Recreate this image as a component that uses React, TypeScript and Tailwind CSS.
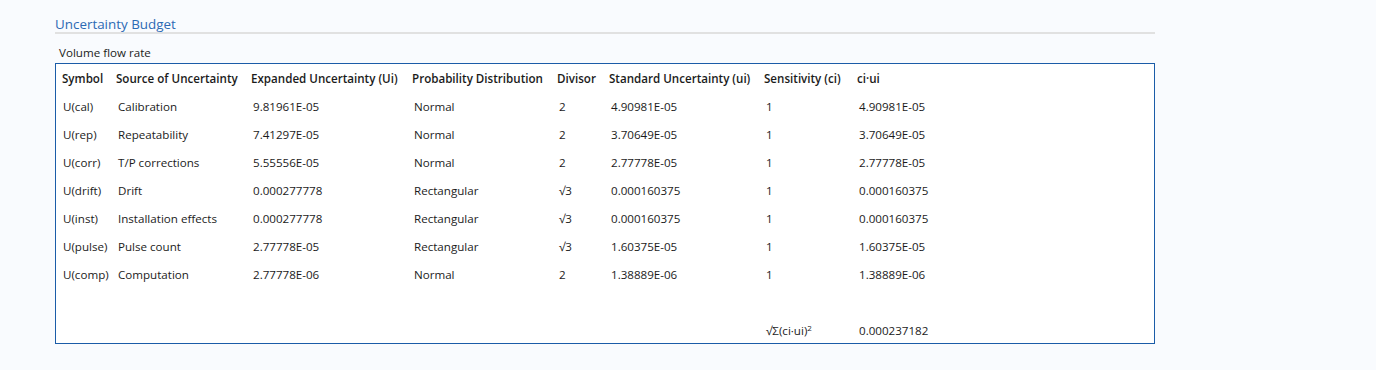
import React from 'react';

interface BudgetRow {
  symbol: string;
  source: string;
  expanded: string;
  distribution: string;
  divisor: string;
  standard: string;
  sensitivity: string;
  contribution: string;
}

const rows: BudgetRow[] = [
  { symbol: 'U(cal)', source: 'Calibration', expanded: '9.81961E-05', distribution: 'Normal', divisor: '2', standard: '4.90981E-05', sensitivity: '1', contribution: '4.90981E-05' },
  { symbol: 'U(rep)', source: 'Repeatability', expanded: '7.41297E-05', distribution: 'Normal', divisor: '2', standard: '3.70649E-05', sensitivity: '1', contribution: '3.70649E-05' },
  { symbol: 'U(corr)', source: 'T/P corrections', expanded: '5.55556E-05', distribution: 'Normal', divisor: '2', standard: '2.77778E-05', sensitivity: '1', contribution: '2.77778E-05' },
  { symbol: 'U(drift)', source: 'Drift', expanded: '0.000277778', distribution: 'Rectangular', divisor: '√3', standard: '0.000160375', sensitivity: '1', contribution: '0.000160375' },
  { symbol: 'U(inst)', source: 'Installation effects', expanded: '0.000277778', distribution: 'Rectangular', divisor: '√3', standard: '0.000160375', sensitivity: '1', contribution: '0.000160375' },
  { symbol: 'U(pulse)', source: 'Pulse count', expanded: '2.77778E-05', distribution: 'Rectangular', divisor: '√3', standard: '1.60375E-05', sensitivity: '1', contribution: '1.60375E-05' },
  { symbol: 'U(comp)', source: 'Computation', expanded: '2.77778E-06', distribution: 'Normal', divisor: '2', standard: '1.38889E-06', sensitivity: '1', contribution: '1.38889E-06' },
];

const headers = [
  'Symbol',
  'Source of Uncertainty',
  'Expanded Uncertainty (Ui)',
  'Probability Distribution',
  'Divisor',
  'Standard Uncertainty (ui)',
  'Sensitivity (ci)',
  'ci·ui',
];

// column tracks measured from the screenshot
const cols = 'grid grid-cols-[54px_135px_161px_145px_52px_155px_93px_1fr]';

export default function App() {
  return (
    <div className="min-h-[370px] bg-[#f9fbfe] text-[11.6px] text-[#1b1b1b] font-['Segoe_UI','Open_Sans',sans-serif]">
      <div className="ml-[55px] w-[1100px] pt-[17px]">
        {/* heading */}
        <h2 className="h-[15px] border-b-2 border-[#e1e1e1] box-content text-[13.4px] leading-[15px] text-[#2c6ab4]">
          Uncertainty Budget
        </h2>

        <div className="mt-[11px] pl-[4px] leading-[16px]">Volume flow rate</div>

        {/* budget table */}
        <div className="mt-[2px] h-[281px] border border-[#1b5ca8] bg-white pl-[6px]">
          <div className={`${cols} h-[28px] items-center pt-[2px] font-semibold`}>
            {headers.map((h) => (
              <div key={h} className="whitespace-nowrap">{h}</div>
            ))}
          </div>

          {rows.map((r) => (
            <div key={r.symbol} className={`${cols} h-[28px] items-center pt-[2px]`}>
              <div className="pl-[1px]">{r.symbol}</div>
              <div className="pl-[2px]">{r.source}</div>
              <div className="pl-[2px]">{r.expanded}</div>
              <div className="pl-[2px]">{r.distribution}</div>
              <div className="pl-[2px]">{r.divisor}</div>
              <div className="pl-[2px]">{r.standard}</div>
              <div className="pl-[2px]">{r.sensitivity}</div>
              <div className="pl-[2px]">{r.contribution}</div>
            </div>
          ))}

          <div className="h-[28px]" />

          {/* combined standard uncertainty */}
          <div className={`${cols} h-[27px] items-center pt-[2px]`}>
            <div className="col-start-7 pl-[2px]">
              √Σ(ci·ui)<sup className="text-[8px]">2</sup>
            </div>
            <div className="pl-[2px]">0.000237182</div>
          </div>
        </div>
      </div>
    </div>
  );
}
